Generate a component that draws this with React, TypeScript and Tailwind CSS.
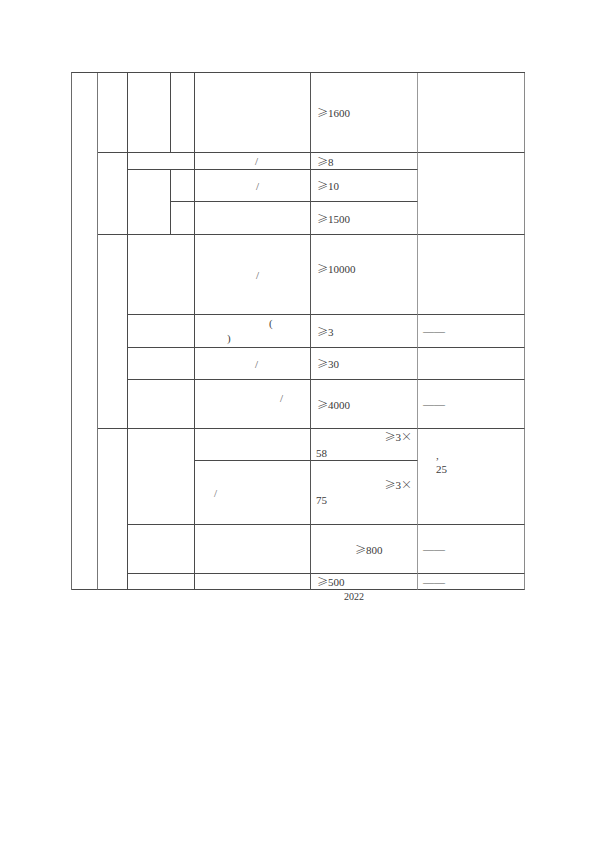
import React from "react";

const serif = { fontFamily: '"Liberation Serif", "Noto Sans CJK SC", serif' };
const cjk = { fontFamily: '"Noto Sans CJK SC", "DejaVu Sans", sans-serif', fontWeight: 300 };

function Ge() {
  return <span className="inline-block w-[11px] text-[11px]" style={cjk}>≥</span>;
}
function Times() {
  return <span className="inline-block w-[11px] text-[11px]" style={cjk}>×</span>;
}

const base = "border-r border-b border-[#4a4a4a]";
const c5 = "border-r border-b border-b-[#4a4a4a] border-r-[#555]";
const c6 = "border-r border-b border-b-[#4a4a4a] border-r-[#999]";
const c7 = "border-r border-b border-b-[#4a4a4a] border-r-[#8a8a8a]";

export default function App() {
  return (
    <div className="w-[596px] h-[842px] bg-white pt-[72px] pl-[71px] text-[11px] text-[#3a3a3a]" style={serif}>
      <div className="grid w-[454px] grid-cols-[26px_30px_43px_24px_116px_107px_107px] grid-rows-[80px_17px_32px_33px_80px_33px_32px_49px_32px_64px_49px_16px] border-l border-t border-l-[#6a6a6a] border-t-[#4a4a4a]">
        {/* column 1 */}
        <div className="col-start-1 row-start-1 row-span-12 border-r border-b border-r-[#777] border-b-[#4a4a4a]" />
        {/* column 2 */}
        <div className={`col-start-2 row-start-1 ${base}`} />
        <div className={`col-start-2 row-start-2 row-span-3 ${base}`} />
        <div className={`col-start-2 row-start-5 row-span-4 ${base}`} />
        <div className={`col-start-2 row-start-9 row-span-4 ${base}`} />
        {/* columns 3-4 */}
        <div className={`col-start-3 row-start-1 ${base}`} />
        <div className={`col-start-4 row-start-1 ${base}`} />
        <div className={`col-start-3 row-start-2 col-span-2 ${base}`} />
        <div className={`col-start-3 row-start-3 row-span-2 ${base}`} />
        <div className={`col-start-4 row-start-3 ${base}`} />
        <div className={`col-start-4 row-start-4 ${base}`} />
        <div className={`col-start-3 row-start-5 col-span-2 ${base}`} />
        <div className={`col-start-3 row-start-6 col-span-2 ${base}`} />
        <div className={`col-start-3 row-start-7 col-span-2 ${base}`} />
        <div className={`col-start-3 row-start-8 col-span-2 ${base}`} />
        <div className={`col-start-3 row-start-9 col-span-2 row-span-2 ${base}`} />
        <div className={`col-start-3 row-start-11 col-span-2 ${base}`} />
        <div className={`col-start-3 row-start-12 col-span-2 ${base}`} />

        {/* column 5 */}
        <div className={`col-start-5 row-start-1 ${c5}`} />
        <div className={`col-start-5 row-start-2 ${c5} flex items-center pl-[60px] leading-[14px] text-[#555]`}>/</div>
        <div className={`col-start-5 row-start-3 ${c5} flex items-center pl-[61px] leading-[14px] text-[#555]`}>/</div>
        <div className={`col-start-5 row-start-4 ${c5}`} />
        <div className={`col-start-5 row-start-5 ${c5} flex items-center pl-[61px] leading-[14px] text-[#555]`}>/</div>
        <div className={`col-start-5 row-start-6 ${c5} flex flex-col justify-center leading-[15px] text-[#444]`}>
          <div className="pl-[74px]">(</div>
          <div className="pl-[32px]">)</div>
        </div>
        <div className={`col-start-5 row-start-7 ${c5} flex items-center pl-[60px] leading-[14px] text-[#555]`}>/</div>
        <div className={`col-start-5 row-start-8 ${c5} pt-[11px] pl-[85px] leading-[14px] text-[#555]`}>/</div>
        <div className={`col-start-5 row-start-9 ${c5}`} />
        <div className={`col-start-5 row-start-10 ${c5} flex items-center pl-[19px] leading-[14px] text-[#666]`}>/</div>
        <div className={`col-start-5 row-start-11 ${c5}`} />
        <div className={`col-start-5 row-start-12 ${c5}`} />

        {/* column 6 */}
        <div className={`col-start-6 row-start-1 ${c6} flex items-center pl-[6px] leading-[14px]`}><span><Ge />1600</span></div>
        <div className={`col-start-6 row-start-2 ${c6} flex items-center pl-[6px] leading-[14px]`}><span><Ge />8</span></div>
        <div className={`col-start-6 row-start-3 ${c6} flex items-center pl-[6px] leading-[14px]`}><span><Ge />10</span></div>
        <div className={`col-start-6 row-start-4 ${c6} flex items-center pl-[6px] leading-[14px]`}><span><Ge />1500</span></div>
        <div className={`col-start-6 row-start-5 ${c6} pt-[26px] pl-[6px] leading-[14px]`}><span><Ge />10000</span></div>
        <div className={`col-start-6 row-start-6 ${c6} flex items-center pl-[6px] leading-[14px]`}><span><Ge />3</span></div>
        <div className={`col-start-6 row-start-7 ${c6} flex items-center pl-[6px] leading-[14px]`}><span><Ge />30</span></div>
        <div className={`col-start-6 row-start-8 ${c6} flex items-center pl-[6px] leading-[14px]`}><span><Ge />4000</span></div>
        <div className={`col-start-6 row-start-9 ${c6} flex flex-col justify-center leading-[16px]`}>
          <div className="text-right pr-[5px]"><Ge />3<Times /></div>
          <div className="pl-[5px]">58</div>
        </div>
        <div className={`col-start-6 row-start-10 ${c6} flex flex-col justify-center leading-[15px] pb-[1px]`}>
          <div className="text-right pr-[5px]"><Ge />3<Times /></div>
          <div className="pl-[5px]">75</div>
        </div>
        <div className={`col-start-6 row-start-11 ${c6} flex items-center pl-[44px] leading-[14px]`}><span><Ge />800</span></div>
        <div className={`col-start-6 row-start-12 ${c6} flex items-center pl-[6px] leading-[14px]`}><span><Ge />500</span></div>

        {/* column 7 */}
        <div className={`col-start-7 row-start-1 ${c7}`} />
        <div className={`col-start-7 row-start-2 row-span-3 ${c7}`} />
        <div className={`col-start-7 row-start-5 ${c7}`} />
        <div className={`col-start-7 row-start-6 ${c7} flex items-center pl-[5px] leading-[14px] text-[#555]`}>——</div>
        <div className={`col-start-7 row-start-7 ${c7}`} />
        <div className={`col-start-7 row-start-8 ${c7} flex items-center pl-[5px] leading-[14px] text-[#555]`}>——</div>
        <div className={`col-start-7 row-start-9 row-span-2 ${c7} pt-[19px] pl-[18px] leading-[14px]`}>
          <div>,</div>
          <div>25</div>
        </div>
        <div className={`col-start-7 row-start-11 ${c7} flex items-center pl-[5px] leading-[14px] text-[#555]`}>——</div>
        <div className={`col-start-7 row-start-12 ${c7} flex items-center pl-[5px] leading-[14px] text-[#555]`}>——</div>
      </div>
      <div className="pl-[273px] text-[10px] leading-[14px]">2022</div>
    </div>
  );
}
